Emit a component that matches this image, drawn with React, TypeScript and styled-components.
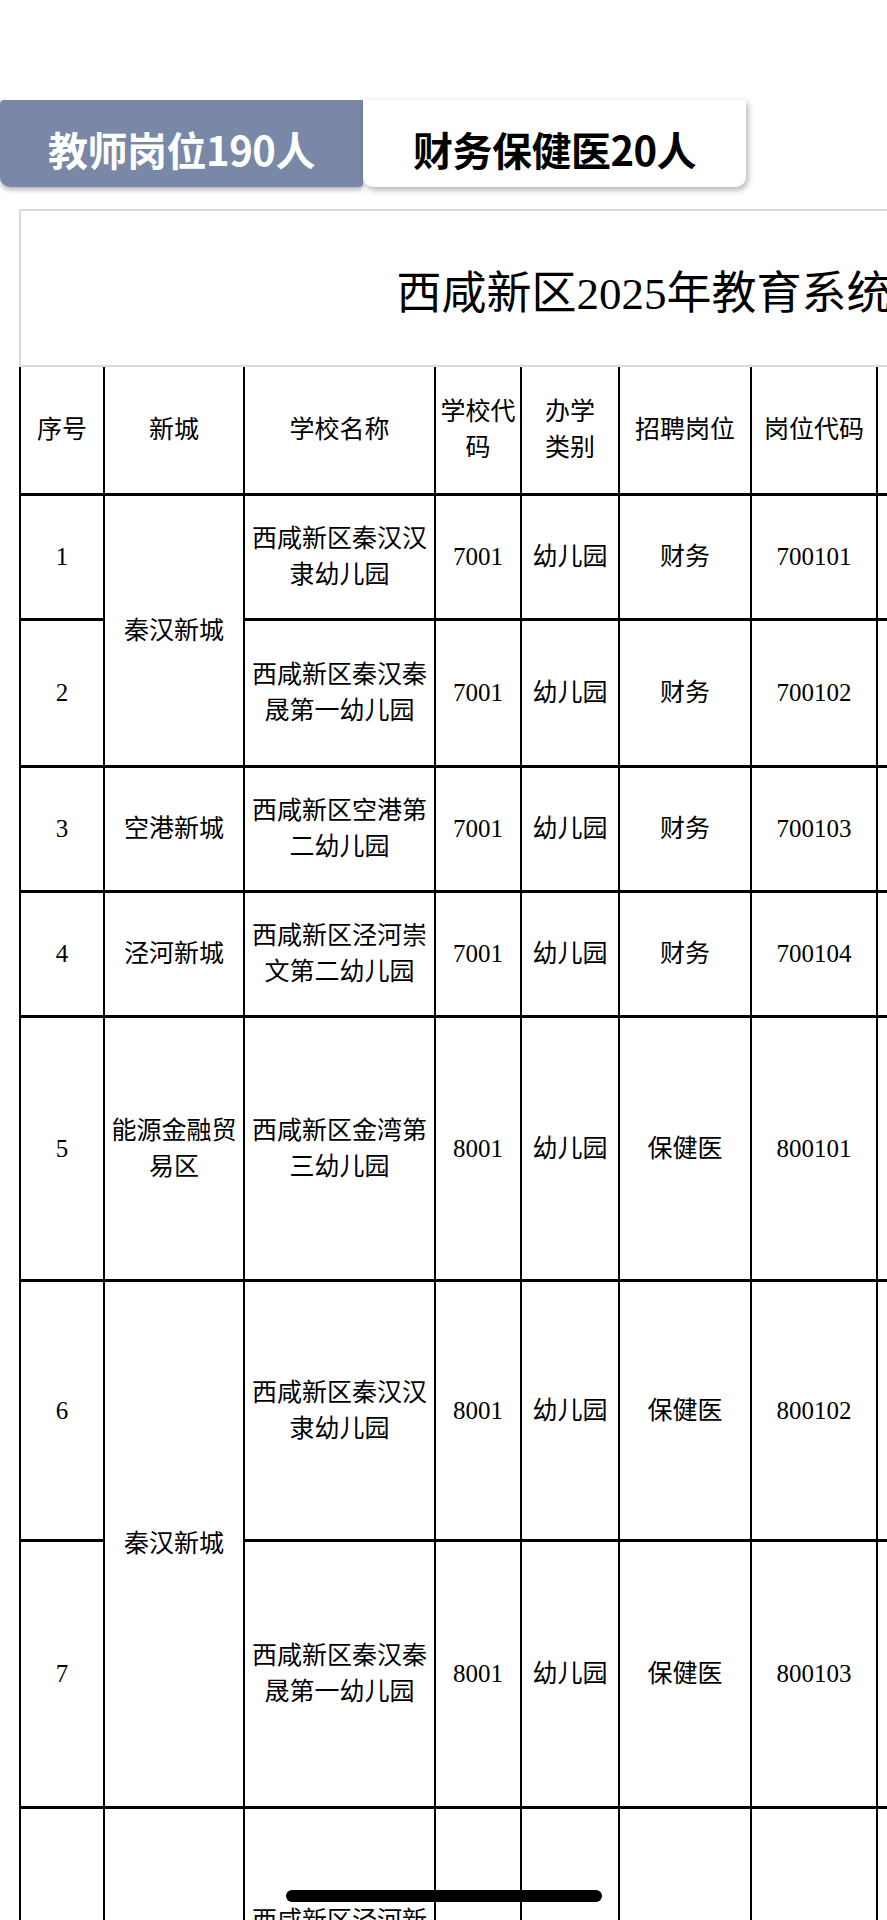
import React from 'react';
import styled, { createGlobalStyle } from 'styled-components';

const GlobalStyle = createGlobalStyle`
  html, body {
    margin: 0;
    padding: 0;
    background: #fff;
    overflow: hidden;
  }
  body {
    font-family: "Liberation Serif", "Noto Sans CJK SC", serif;
    color: #000;
  }
`;

const Page = styled.div`
  width: 887px;
  overflow: hidden;
  padding-top: 100px;
`;

const TabBar = styled.div`
  display: flex;
`;

const Tab = styled.div<{ $active?: boolean; $width: number }>`
  width: ${(p) => p.$width}px;
  height: 87px;
  box-sizing: border-box;
  padding-top: 10px;
  display: flex;
  align-items: center;
  justify-content: center;
  font-family: "Noto Sans CJK SC", sans-serif;
  font-weight: 700;
  font-size: 40px;
  letter-spacing: -0.5px;
  color: ${(p) => (p.$active ? '#fff' : '#000')};
  background: ${(p) => (p.$active ? '#7888a6' : '#fff')};
  border-radius: ${(p) => (p.$active ? '4px 0 4px 10px' : '0 0 10px 10px')};
  box-shadow: ${(p) =>
    p.$active ? '0 3px 5px rgba(0, 0, 0, 0.28)' : '2px 3px 6px rgba(0, 0, 0, 0.3)'};
  position: relative;
  z-index: ${(p) => (p.$active ? 1 : 2)};
`;

const SHEET_WIDTH = 1700;

const Sheet = styled.div`
  margin: 22px 0 0 19px;
  width: ${SHEET_WIDTH}px;
`;

const TitleBox = styled.div`
  height: 158px;
  box-sizing: border-box;
  border: 2px solid #d9d9e7;
  display: flex;
  align-items: center;
  justify-content: center;
  font-size: 45px;
  padding-top: 2px;
  white-space: nowrap;
`;

const Grid = styled.table`
  width: ${SHEET_WIDTH}px;
  table-layout: fixed;
  border-collapse: separate;
  border-spacing: 0;
  border-left: 2px solid #000;
`;

const Row = styled.tr<{ $h: number }>`
  height: ${(p) => p.$h}px;
`;

const HeadCell = styled.th`
  padding: 0 2px;
  box-sizing: border-box;
  font-weight: 400;
  font-size: 25px;
  line-height: 36px;
  text-align: center;
  vertical-align: middle;
  border-right: 2px solid #000;
  border-bottom: 3px solid #000;
`;

const Cell = styled.td`
  padding: 0 2px;
  box-sizing: border-box;
  font-size: 25px;
  line-height: 36px;
  text-align: center;
  vertical-align: middle;
  border-right: 2px solid #000;
  border-bottom: 3px solid #000;
  white-space: nowrap;
`;

const HomeIndicator = styled.div`
  position: fixed;
  left: 50%;
  bottom: 18px;
  transform: translateX(-50%);
  width: 316px;
  height: 12px;
  border-radius: 6px;
  background: #000;
`;

const columns = [
  { label: ['序号'], width: 84 },
  { label: ['新城'], width: 140 },
  { label: ['学校名称'], width: 191 },
  { label: ['学校代', '码'], width: 86 },
  { label: ['办学', '类别'], width: 98 },
  { label: ['招聘岗位'], width: 132 },
  { label: ['岗位代码'], width: 126 },
  { label: ['招聘人数'], width: 160 },
  { label: ['学历要求'], width: 171 },
  { label: ['专业要求'], width: 330 },
  { label: ['其他条件'], width: 180 },
];

type Job = {
  no: string;
  city?: { lines: string[]; span: number };
  school: string[];
  code: string;
  kind: string;
  post: string;
  postCode: string;
  major: string;
  h: number;
};

const jobs: Job[] = [
  { no: '1', city: { lines: ['秦汉新城'], span: 2 }, school: ['西咸新区秦汉汉', '隶幼儿园'], code: '7001', kind: '幼儿园', post: '财务', postCode: '700101', major: '会计学', h: 125 },
  { no: '2', school: ['西咸新区秦汉秦', '晟第一幼儿园'], code: '7001', kind: '幼儿园', post: '财务', postCode: '700102', major: '会计学', h: 147 },
  { no: '3', city: { lines: ['空港新城'], span: 1 }, school: ['西咸新区空港第', '二幼儿园'], code: '7001', kind: '幼儿园', post: '财务', postCode: '700103', major: '会计学', h: 125 },
  { no: '4', city: { lines: ['泾河新城'], span: 1 }, school: ['西咸新区泾河崇', '文第二幼儿园'], code: '7001', kind: '幼儿园', post: '财务', postCode: '700104', major: '会计学', h: 125 },
  { no: '5', city: { lines: ['能源金融贸', '易区'], span: 1 }, school: ['西咸新区金湾第', '三幼儿园'], code: '8001', kind: '幼儿园', post: '保健医', postCode: '800101', major: '临床医学', h: 264 },
  { no: '6', city: { lines: ['秦汉新城'], span: 2 }, school: ['西咸新区秦汉汉', '隶幼儿园'], code: '8001', kind: '幼儿园', post: '保健医', postCode: '800102', major: '临床医学', h: 260 },
  { no: '7', school: ['西咸新区秦汉秦', '晟第一幼儿园'], code: '8001', kind: '幼儿园', post: '保健医', postCode: '800103', major: '临床医学', h: 267 },
  { no: '8', city: { lines: ['泾河新城'], span: 1 }, school: ['西咸新区泾河新', '城第一幼儿园'], code: '8001', kind: '幼儿园', post: '保健医', postCode: '800104', major: '临床医学', h: 262 },
];

const Lines: React.FC<{ lines: string[] }> = ({ lines }) => (
  <>
    {lines.map((line, i) => (
      <React.Fragment key={i}>
        {i > 0 && <br />}
        {line}
      </React.Fragment>
    ))}
  </>
);

const App: React.FC = () => {
  return (
    <Page>
      <GlobalStyle />
      <TabBar>
        <Tab $active $width={363}>教师岗位190人</Tab>
        <Tab $width={383}>财务保健医20人</Tab>
      </TabBar>

      <Sheet>
        <TitleBox>西咸新区2025年教育系统公开招聘教职工岗位表</TitleBox>
        <Grid>
          <colgroup>
            {columns.map((c, i) => (
              <col key={i} style={{ width: c.width }} />
            ))}
          </colgroup>
          <thead>
            <Row $h={129}>
              {columns.map((c, i) => (
                <HeadCell key={i}>
                  <Lines lines={c.label} />
                </HeadCell>
              ))}
            </Row>
          </thead>
          <tbody>
            {jobs.map((job) => (
              <Row key={job.no} $h={job.h}>
                <Cell>{job.no}</Cell>
                {job.city && (
                  <Cell rowSpan={job.city.span}>
                    <Lines lines={job.city.lines} />
                  </Cell>
                )}
                <Cell>
                  <Lines lines={job.school} />
                </Cell>
                <Cell>{job.code}</Cell>
                <Cell>{job.kind}</Cell>
                <Cell>{job.post}</Cell>
                <Cell>{job.postCode}</Cell>
                <Cell>1</Cell>
                <Cell>大专及以上</Cell>
                <Cell>{job.major}</Cell>
                <Cell>—</Cell>
              </Row>
            ))}
          </tbody>
        </Grid>
      </Sheet>

      <HomeIndicator />
    </Page>
  );
};

export default App;
